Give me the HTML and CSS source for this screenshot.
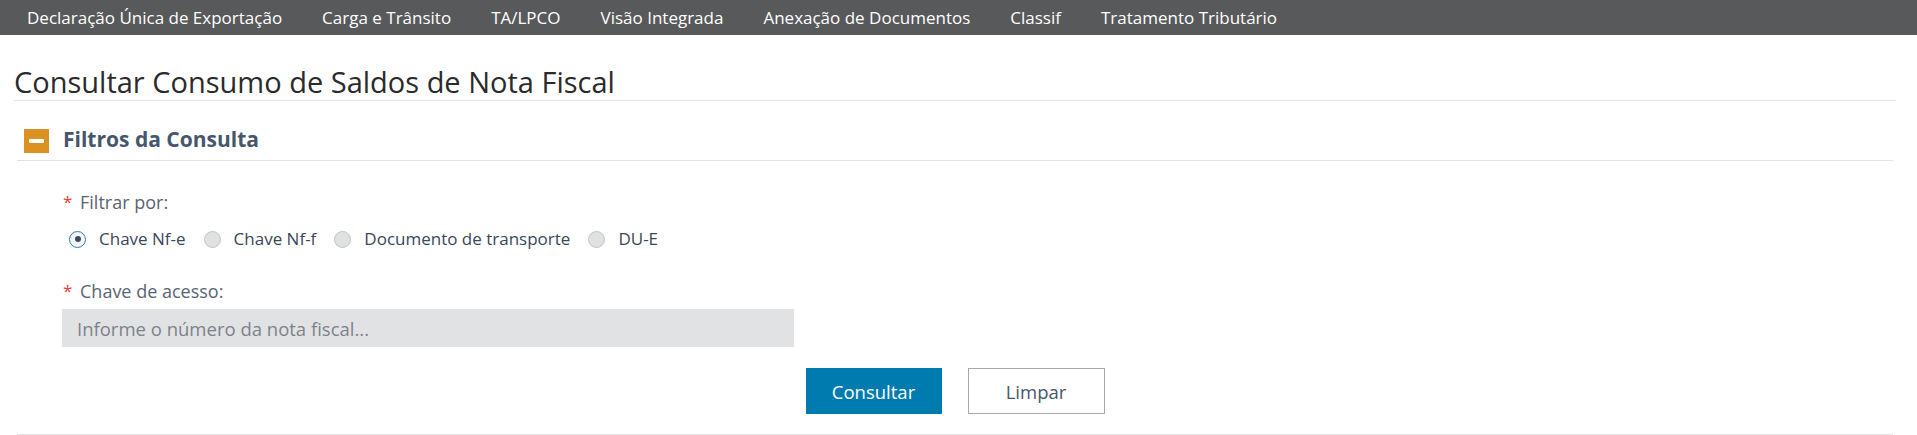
FILE: index.html
```html
<!DOCTYPE html>
<html lang="pt-BR">
<head>
<meta charset="utf-8">
<title>Consultar Consumo de Saldos de Nota Fiscal</title>
<link rel="stylesheet" href="styles.css">
</head>
<body>
<nav class="topnav">
  <a class="topnav-item" href="#">Declaração Única de Exportação</a>
  <a class="topnav-item" href="#">Carga e Trânsito</a>
  <a class="topnav-item" href="#">TA/LPCO</a>
  <a class="topnav-item" href="#">Visão Integrada</a>
  <a class="topnav-item" href="#">Anexação de Documentos</a>
  <a class="topnav-item" href="#">Classif</a>
  <a class="topnav-item" href="#">Tratamento Tributário</a>
</nav>
<main class="page">
  <h1 class="page-title">Consultar Consumo de Saldos de Nota Fiscal</h1>
  <section class="panel">
    <header class="panel-header">
      <span class="toggle"><span class="toggle-bar"></span></span>
      <h2 class="panel-title">Filtros da Consulta</h2>
    </header>
    <form class="panel-body">
      <div class="field-label"><span class="req">*</span>Filtrar por:</div>
      <div class="radio-row">
        <label class="radio"><input type="radio" name="filtro" checked><span>Chave Nf-e</span></label>
        <label class="radio"><input type="radio" name="filtro"><span>Chave Nf-f</span></label>
        <label class="radio"><input type="radio" name="filtro"><span>Documento de transporte</span></label>
        <label class="radio"><input type="radio" name="filtro"><span>DU-E</span></label>
      </div>
      <div class="field-label field-label-second"><span class="req">*</span>Chave de acesso:</div>
      <input class="text-input" type="text" placeholder="Informe o número da nota fiscal...">
      <div class="actions">
        <button type="button" class="btn btn-primary">Consultar</button>
        <button type="button" class="btn btn-secondary">Limpar</button>
      </div>
    </form>
  </section>
</main>
</body>
</html>
```
FILE: styles.css
```css
* { box-sizing: border-box; }

body {
  margin: 0;
  font-family: "Open Sans", "Noto Sans", sans-serif;
  background: #ffffff;
  color: #333333;
}

.topnav {
  display: flex;
  height: 35px;
  background: #58595b;
  padding-left: 7px;
}

.topnav-item {
  padding: 0 20px;
  line-height: 35px;
  font-size: 17px;
  color: #ffffff;
  text-decoration: none;
  white-space: nowrap;
}

.page {
  padding: 0 21px 0 14px;
}

.page-title {
  margin: 30px 0 0;
  padding-bottom: 1px;
  font-size: 29px;
  font-weight: 400;
  line-height: 34px;
  color: #2b2b2b;
  border-bottom: 1px solid #e2e2e2;
}

.panel {
  margin: 0 3px;
  border-bottom: 1px solid #e2e2e2;
}

.panel-header {
  display: flex;
  align-items: center;
  gap: 14px;
  height: 40px;
  margin-top: 20px;
  padding-left: 7px;
  border-bottom: 1px solid #e2e2e2;
}

.toggle {
  display: flex;
  align-items: center;
  justify-content: center;
  width: 25px;
  height: 24px;
  background: #dc9223;
}

.toggle-bar {
  width: 15px;
  height: 4px;
  border-radius: 1px;
  background: #ffffff;
}

.panel-title {
  margin: 0 0 3px;
  font-size: 21px;
  font-weight: 700;
  line-height: 28px;
  color: #46576d;
}

.panel-body {
  display: flex;
  flex-direction: column;
  align-items: flex-start;
  padding: 30px 0 20px 45px;
}

.field-label {
  display: flex;
  align-items: center;
  font-size: 18px;
  line-height: 22px;
  color: #5a6472;
}

.field-label-second {
  margin-top: 30px;
}

.req {
  color: #e8413b;
  width: 18px;
  padding-left: 1px;
  font-size: 17px;
}

.radio-row {
  display: flex;
  align-items: center;
  gap: 18px;
  margin-top: 15px;
  padding-left: 7px;
}

.radio {
  display: flex;
  align-items: center;
  gap: 13px;
  font-size: 17px;
  line-height: 22px;
  color: #3b4758;
}

.radio input {
  appearance: none;
  -webkit-appearance: none;
  margin: 0;
  width: 17px;
  height: 17px;
  border-radius: 50%;
  border: 1px solid #c2c4c7;
  background: #e0e1e3;
  display: grid;
  place-items: center;
}

.radio input:checked {
  border: 1.5px solid #2d7db8;
  background: #f4f6f8;
}

.radio input:checked::after {
  content: "";
  width: 6px;
  height: 6px;
  border-radius: 50%;
  background: #3d4b60;
}

.text-input {
  margin-top: 7px;
  width: 732px;
  height: 38px;
  border: none;
  background: #e1e2e4;
  padding: 0 15px;
  font-family: inherit;
  font-size: 18.5px;
  color: #555;
}

.text-input::placeholder {
  color: #7d828a;
}

.actions {
  align-self: stretch;
  display: flex;
  justify-content: center;
  gap: 26px;
  margin-top: 21px;
  margin-left: -45px;
}

.btn {
  width: 136px;
  height: 46px;
  font-family: inherit;
  font-size: 18.5px;
  cursor: pointer;
}

.btn-primary {
  background: #007bb0;
  border: none;
  color: #ffffff;
}

.btn-secondary {
  width: 137px;
  background: #ffffff;
  border: 1.5px solid #a9a9a9;
  color: #46576d;
}
```
